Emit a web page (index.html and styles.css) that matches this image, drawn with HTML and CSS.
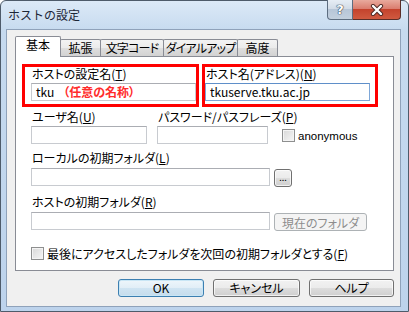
FILE: index.html
```html
<!DOCTYPE html>
<html lang="ja">
<head>
    <meta charset="UTF-8">
    <title>ホストの設定</title>
    <link rel="stylesheet" href="styles.css">
</head>
<body>
    <div class="window">
        <div class="titlebar">
            <div class="title">ホストの設定</div>
            <div class="caption-buttons">
                <div class="cap-btn cap-help">?</div>
                <div class="cap-btn cap-close">
                    <svg width="14" height="12" viewBox="0 0 14 12">
                        <path d="M3 2 L11 10 M11 2 L3 10" stroke="#4b2823" stroke-width="4.2" stroke-linecap="round"/>
                        <path d="M3 2 L11 10 M11 2 L3 10" stroke="#ffffff" stroke-width="2.4" stroke-linecap="round"/>
                    </svg>
                </div>
            </div>
        </div>

        <div class="client">
            <div class="tabs">
                <div class="tab active" style="width: 46px;">基本</div>
                <div class="tab" style="width: 41px;">拡張</div>
                <div class="tab tab-tight" style="width: 64px;">文字コード</div>
                <div class="tab tab-tight" style="width: 75px;">ダイアルアップ</div>
                <div class="tab" style="width: 41px;">高度</div>
            </div>

            <div class="panel">
                <div class="highlight-row">
                    <div class="hl hl-name">
                        <div class="label">ホストの設定名(<u>T</u>)</div>
                        <div class="field field-name">tku<span class="note">（任意の名称）</span></div>
                    </div>
                    <div class="hl hl-host">
                        <div class="label">ホスト名(アドレス)(<u>N</u>)</div>
                        <div class="field field-host focused">tkuserve.tku.ac.jp</div>
                    </div>
                </div>

                <div class="rows">
                    <div class="row row-login">
                        <div class="group group-user">
                            <div class="label">ユーザ名(<u>U</u>)</div>
                            <div class="field"></div>
                        </div>
                        <div class="group group-pass">
                            <div class="label">パスワード/パスフレーズ(<u>P</u>)</div>
                            <div class="field"></div>
                        </div>
                        <label class="check check-anon">
                            <span class="box"></span>
                            <span class="latin">anonymous</span>
                        </label>
                    </div>

                    <div class="row-block block-local">
                        <div class="label">ローカルの初期フォルダ(<u>L</u>)</div>
                        <div class="line">
                            <div class="field field-wide"></div>
                            <div class="btn btn-browse">...</div>
                        </div>
                    </div>

                    <div class="row-block block-remote">
                        <div class="label">ホストの初期フォルダ(<u>R</u>)</div>
                        <div class="line">
                            <div class="field field-wide"></div>
                            <div class="btn btn-current disabled">現在のフォルダ</div>
                        </div>
                    </div>

                    <label class="check check-last">
                        <span class="box"></span>
                        <span>最後にアクセスしたフォルダを次回の初期フォルダとする(<u>F</u>)</span>
                    </label>
                </div>
            </div>

            <div class="actions">
                <div class="btn btn-dialog default" style="width: 86px;">OK</div>
                <div class="btn btn-dialog" style="width: 87px;">キャンセル</div>
                <div class="btn btn-dialog" style="width: 85px;">ヘルプ</div>
            </div>
        </div>
    </div>
</body>
</html>
```

FILE: styles.css
```css
* {
    box-sizing: border-box;
    margin: 0;
    padding: 0;
}

body {
    font-family: "Noto Sans CJK JP", "Noto Sans", sans-serif;
    font-size: 12px;
    color: #000;
    background: #fff;
    font-feature-settings: "palt" 1;
}

u {
    text-decoration: underline;
    text-underline-offset: 1px;
}

.window {
    width: 409px;
    height: 312px;
    border: 1px solid #4e5b6a;
    border-radius: 6px 6px 0 0;
    background: linear-gradient(to bottom, #dce9f7, #c6daef 30px, #bdd3ec);
    padding: 0 7px 4px 5px;
    display: flex;
    flex-direction: column;
}

.titlebar {
    height: 28px;
    display: flex;
    justify-content: space-between;
    align-items: flex-start;
}

.title {
    padding: 7px 0 0 2px;
    line-height: 14px;
    font-size: 12px;
    color: #1c2636;
    font-feature-settings: normal;
}

.caption-buttons {
    display: flex;
    margin-top: -1px;
}

.cap-btn {
    height: 20px;
    display: flex;
    align-items: center;
    justify-content: center;
}

.cap-help {
    width: 26px;
    border: 1px solid #5d6d80;
    border-top: none;
    border-radius: 0 0 0 4px;
    background: linear-gradient(to bottom, #e6edf5, #d0dae6 50%, #b7c6d8 50%, #c3d0de);
    color: #fff;
    font-family: "DejaVu Sans", sans-serif;
    font-weight: bold;
    font-size: 13px;
    text-shadow: 0 0 1px #2c3a4c, 0 0 1px #2c3a4c, 0 0 1px #2c3a4c;
}

.cap-close {
    width: 48px;
    border: 1px solid #5a2e28;
    border-top: none;
    border-left: none;
    border-radius: 0 0 4px 0;
    background: linear-gradient(to bottom, #e8aa9d, #d9796a 50%, #c4432d 50%, #d05a40);
}

.client {
    flex: 1;
    background: #f0f0f0;
    border: 1px solid #8fa2ba;
    padding: 6px 6px 0 8px;
    display: flex;
    flex-direction: column;
}

/* tab strip */
.tabs {
    display: flex;
    align-items: flex-end;
    height: 20px;
    padding-left: 1px;
}

.tab {
    height: 17px;
    margin-left: -1px;
    border: 1px solid #898c95;
    border-bottom: none;
    border-radius: 2px 2px 0 0;
    background: linear-gradient(to bottom, #f3f3f3, #ebebeb 50%, #dedede 50%, #d2d2d2);
    text-align: center;
    line-height: 16px;
    white-space: nowrap;
}

.tab-tight {
    letter-spacing: -0.8px;
}

.tab.active {
    height: 21px;
    margin-bottom: -1px;
    background: #fff;
    position: relative;
    z-index: 1;
    line-height: 16px;
}

.panel {
    height: 215px;
    background: #fff;
    border: 1px solid #898c95;
    padding: 7px 0 0 6px;
}

.label {
    line-height: 14px;
    white-space: nowrap;
}

.field {
    height: 18px;
    border: 1px solid #c8cbd0;
    border-top-color: #abadb3;
    background: #fff;
    padding: 0 4px;
    line-height: 16px;
    white-space: nowrap;
}

.field.focused {
    border-color: #7ea7d8;
    border-top-color: #5f8fc9;
}

/* red highlight boxes */
.highlight-row {
    display: flex;
    gap: 3px;
}

.hl {
    height: 43px;
    border: 3px solid #ff0000;
}

.hl-name {
    width: 177px;
    padding-left: 6px;
}

.hl-name .label {
    padding-left: 1px;
}

.hl-host {
    width: 176px;
}

.hl-host .label {
    padding-left: 1px;
}

.hl .field {
    margin-top: 2px;
}

.field-name {
    width: 165px;
}

.field-host {
    width: 165px;
}

.note {
    color: #ff2b2b;
    font-weight: bold;
    margin-left: 9px;
}

/* plain rows */
.rows {
    padding-left: 9px;
}

.row-login {
    display: flex;
    align-items: flex-end;
    margin-top: 3px;
}

.group .field {
    margin-top: 2px;
}

.group-user {
    width: 116px;
}

.group-pass {
    width: 111px;
    margin-left: 10px;
}

.group .label {
    padding-left: 1px;
}

.check {
    display: flex;
    align-items: center;
    gap: 3px;
}

.box {
    width: 13px;
    height: 13px;
    border: 1px solid #8e8f8f;
    background: linear-gradient(135deg, #d8d8d8, #f6f6f6);
    box-shadow: inset 0 0 0 1px #f4f4f4;
}

.check-anon {
    margin-left: 14px;
    margin-bottom: 2px;
}

.latin {
    font-family: "Liberation Sans", "Noto Sans", sans-serif;
    font-size: 11.5px;
}

.row-block .label {
    padding-left: 1px;
}

.block-local {
    margin-top: 7px;
}

.block-remote {
    margin-top: 8px;
}

.line {
    display: flex;
    align-items: flex-start;
    margin-top: 3px;
}

.field-wide {
    width: 239px;
}

.btn {
    height: 18px;
    border: 1px solid #707070;
    border-radius: 3px;
    background: linear-gradient(to bottom, #f2f2f2, #ebebeb 50%, #dddddd 50%, #cfcfcf);
    display: flex;
    align-items: center;
    justify-content: center;
    box-shadow: inset 0 0 0 1px rgba(255, 255, 255, 0.7);
}

.btn-browse {
    width: 18px;
    margin-left: 4px;
    margin-top: 1px;
    font-size: 9px;
    line-height: 1;
    padding-bottom: 2px;
}

.btn-current {
    width: 93px;
    margin-left: 4px;
    margin-top: 1px;
}

.btn.disabled {
    border-color: #adb2b5;
    background: #f4f4f4;
    color: #8d8d8d;
    box-shadow: none;
}

.check-last {
    margin-top: 14px;
}

/* dialog buttons */
.actions {
    display: flex;
    justify-content: flex-end;
    gap: 9px;
    margin-top: 8px;
}

.btn-dialog {
    line-height: 16px;
}

.btn.default {
    border-color: #3c7fb1;
    background: linear-gradient(to bottom, #eef6fb, #e1eef7 50%, #cfe4f2 50%, #c5dcec);
    box-shadow: inset 0 0 0 1px #c9e6f5;
}
```
